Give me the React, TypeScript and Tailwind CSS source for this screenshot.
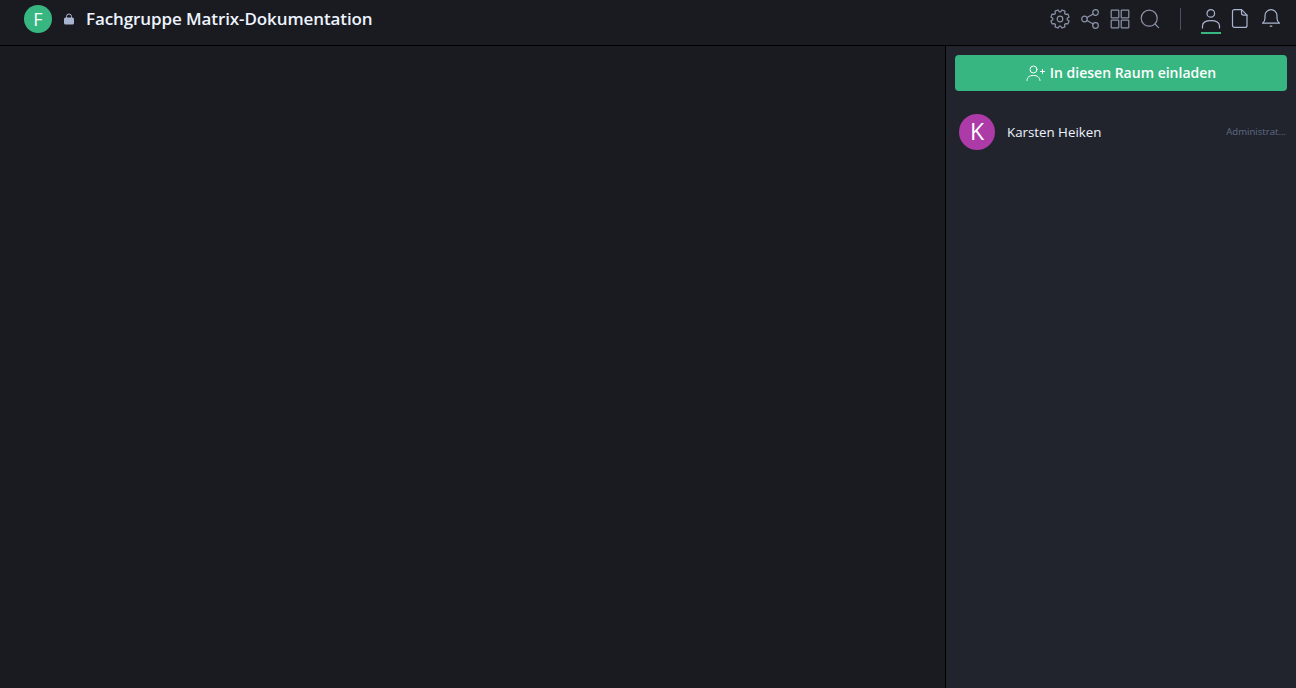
// 8 toothed gear outline, Lucide's cog doesn't match the reference
function gearPath() {
    const pts: string[] = [];
    for (let i = 0; i < 8; i++) {
        const a = (i * Math.PI) / 4 + Math.PI / 8;
        for (const [off, r] of [[-0.3, 7.2], [-0.17, 9.3], [0.17, 9.3], [0.3, 7.2]]) {
            pts.push(`${(10 + r * Math.cos(a + off)).toFixed(2)} ${(10 + r * Math.sin(a + off)).toFixed(2)}`);
        }
    }
    return 'M' + pts.join('L') + 'Z';
}

const dim = 'w-[20px] h-[20px] shrink-0 text-[#8a93a8]';
const bright = 'w-[20px] h-[20px] shrink-0 text-[#a9b5d0]';

function Icon({ className, children }: { className: string; children: React.ReactNode }) {
    return (
        <svg viewBox="0 0 20 20" className={className} fill="none" stroke="currentColor" strokeWidth="1.2" strokeLinecap="round" strokeLinejoin="round">
            {children}
        </svg>
    );
}

export default function App() {
    return (
        <div className="h-[688px] w-[1296px] flex flex-col overflow-hidden bg-[#1a1b20] font-['Open_Sans','Liberation_Sans',sans-serif]">
            {/* Header */}
            <header className="h-[46px] shrink-0 flex items-center border-b border-black pl-[24px] pr-[15px] pb-[7px]">
                <div className="w-[28px] h-[28px] rounded-full bg-[#38b682] flex items-center justify-center text-white text-[18px]">F</div>
                <svg viewBox="0 0 10 12" className="w-[10px] h-[12px] ml-[12px] mt-[-1px] text-[#a9b5d0]" fill="currentColor">
                    <path d="M2.5 5V3.5a2.5 2.5 0 0 1 5 0V5" fill="none" stroke="currentColor" strokeWidth="1" />
                    <rect x="0" y="4.5" width="10" height="7" rx="1.5" />
                </svg>
                <h1 className="ml-[12px] text-[17px] font-semibold text-[#edf3ff] tracking-[-0.1px]">Fachgruppe Matrix-Dokumentation</h1>
                <div className="ml-auto flex items-center gap-[10px]">
                    <Icon className={dim}>
                        <path d={gearPath()} />
                        <circle cx="10" cy="10" r="2.8" />
                    </Icon>
                    <Icon className={dim}>
                        <circle cx="4.5" cy="10" r="2.8" />
                        <circle cx="15.5" cy="3.5" r="2.8" />
                        <circle cx="15.5" cy="16.5" r="2.8" />
                        <path d="M7 8.6l6.2-3.7M7 11.4l6.2 3.7" />
                    </Icon>
                    <Icon className={dim}>
                        <rect x="1.2" y="1.2" width="7.6" height="7.6" rx="0.5" />
                        <rect x="11.2" y="1.2" width="7.6" height="7.6" rx="0.5" />
                        <rect x="1.2" y="11.2" width="7.6" height="7.6" rx="0.5" />
                        <rect x="11.2" y="11.2" width="7.6" height="7.6" rx="0.5" />
                    </Icon>
                    <Icon className={dim}>
                        <circle cx="9.2" cy="9.2" r="8" />
                        <path d="M15 15l3.6 3.6" />
                    </Icon>
                    <div className="w-[1px] h-[22px] bg-[#4a5160] mx-[10px]" />
                    <div className="relative w-[20px] h-[20px] shrink-0">
                        <Icon className={bright}>
                            <circle cx="9.8" cy="4.4" r="3.8" />
                            <path d="M1.5 19v-2c0-3.5 3-5.3 8.5-5.3s8.5 1.8 8.5 5.3v2" />
                        </Icon>
                        <div className="absolute left-0 right-0 top-[23px] h-[2px] bg-[#38b682]" />
                    </div>
                    <Icon className={bright}>
                        <path d="M3.5 0.6h7l5.5 5.5v10.3a2 2 0 0 1-2 2H3.5a2 2 0 0 1-2-2V2.6a2 2 0 0 1 2-2z" />
                        <path d="M10.5 0.6v3.5a2 2 0 0 0 2 2H16" />
                    </Icon>
                    <Icon className={bright}>
                        <path d="M1.5 14.2c1.5-1 2.5-2.5 2.5-5V6.6a6 6 0 0 1 12 0v2.6c0 2.5 1 4 2.5 5z" />
                        <path d="M9.2 17.2h1.6" />
                    </Icon>
                </div>
            </header>
            <div className="flex-1 flex min-h-0">
                <main className="flex-1" />
                {/* Member panel */}
                <aside className="w-[351px] shrink-0 bg-[#22242d] border-l border-black pl-[9px] pr-[9px] pt-[9px]">
                    <button className="w-full h-[36px] rounded-[4px] bg-[#38b682] text-white text-[14px] font-semibold flex items-center justify-center gap-[5px] pb-[1px]">
                        <svg viewBox="0 0 19 16" className="w-[19px] h-[16px]" fill="none" stroke="currentColor" strokeWidth="1" strokeLinecap="round">
                            <circle cx="7.5" cy="4.5" r="3.5" />
                            <path d="M1 15.5c0-3.5 2.5-5 6.5-5s6 1.5 6.5 5" />
                            <path d="M14.5 6.5h4M16.5 4.5v4" />
                        </svg>
                        In diesen Raum einladen
                    </button>
                    <div className="flex items-center mt-[23px] pl-[4px]">
                        <div className="w-[36px] h-[36px] rounded-full bg-[#ac3ba8] flex items-center justify-center text-white text-[23px] shrink-0 pb-[2px]">K</div>
                        <span className="ml-[12px] text-[13.3px] text-[#edf3ff] pt-[1px]">Karsten Heiken</span>
                        <span className="ml-auto text-[9.6px] text-[#5f6b85] pr-[1px]">Administrat...</span>
                    </div>
                </aside>
            </div>
        </div>
    );
}
